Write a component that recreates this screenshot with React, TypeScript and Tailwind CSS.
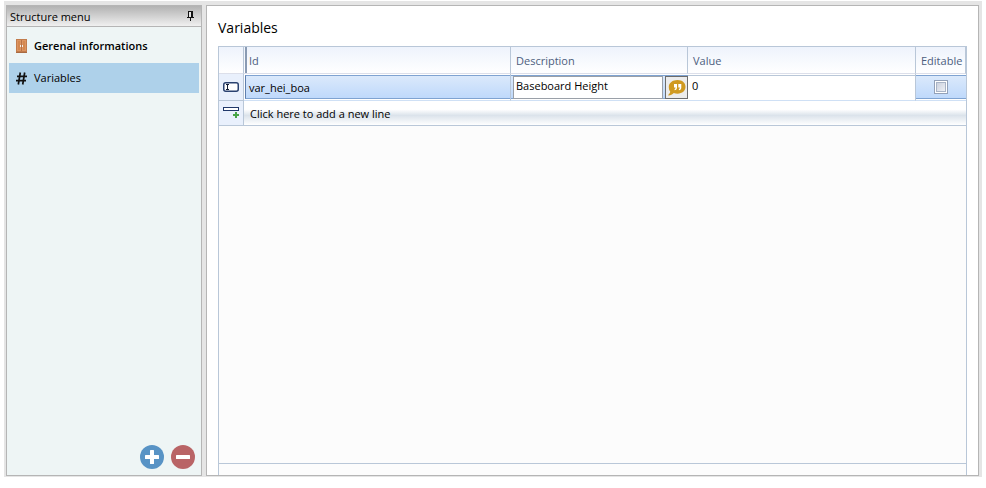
import React, { useState } from "react";

function PinIcon() {
  return (
    <svg width="7" height="11" viewBox="0 0 7 11" shapeRendering="crispEdges" aria-hidden="true">
      <path d="M1 0h5v6H1z" fill="#111" />
      <path d="M2 1h2v5H2z" fill="#e4e4e4" />
      <path d="M0 6h7v1H0zM3 7h1v3H3z" fill="#111" />
    </svg>
  );
}

function CabinetIcon() {
  return (
    <svg width="11" height="14" viewBox="0 0 11 14" aria-hidden="true">
      <path d="M0 0h11v14H0z" fill="#c27c4c" />
      <path d="M1 1h4v11H1zM6 1h4v11H6z" fill="#dc9562" />
      <path d="M2 2h2v9H2zM7 2h2v9H7z" fill="#d4884f" />
      <path d="M5 1h1v11H5z" fill="#b87347" />
      <path d="M4 6h1v2H4zM6 6h1v2H6z" fill="#f3efe9" />
      <path d="M0 13h11v1H0z" fill="#a96a42" />
    </svg>
  );
}

function HashIcon() {
  return (
    <svg width="11" height="13" viewBox="0 0 11 13" fill="none" stroke="#111" aria-hidden="true">
      <path d="M4.300 0.500L2.300 12.500M8.700 0.500L6.700 12.500" strokeWidth="1.700" />
      <path d="M1 4.300h10M0 8.700h10" strokeWidth="1.700" />
    </svg>
  );
}

function EditRowIcon() {
  return (
    <svg className="mx-auto block" width="16" height="10" viewBox="0 0 16 10" fill="none" aria-hidden="true">
      <rect x="0.750" y="0.750" width="14.500" height="8.500" rx="2" fill="#fff" stroke="#2b4270" strokeWidth="1.500" />
      <path d="M3 2.500h3M3 7.500h3M4.500 2.500v5" stroke="#111b33" />
    </svg>
  );
}

function AddRowIcon() {
  return (
    <svg className="mx-auto block" width="16" height="12" viewBox="0 0 16 12" fill="none" aria-hidden="true">
      <path d="M0 0h16v4H0z" fill="#20386a" />
      <path d="M1 1h14v2H1z" fill="#fff" />
      <path d="M13 5v6M10 8h6" stroke="#47a447" strokeWidth="2" />
    </svg>
  );
}

function QuoteIcon() {
  return (
    <svg width="18" height="16" viewBox="0 0 18 16" aria-hidden="true">
      <path
        d="M9.500 0C14.300 0 17.500 2.900 17.500 6.800s-3.200 6.900-8 6.900c-1.300 0-2.600-.2-3.700-.7C4.300 14.500 2.500 15.500.7 15.600c-.5 0-.6-.5-.3-.8 1-.9 1.700-2 1.800-3.200C1.100 10.300.8 8.700.8 6.800.8 2.900 4.700 0 9.500 0z"
        fill="#d09a20"
      />
      <path
        d="M6 4h3v3.500c0 1.600-.9 2.600-2.400 2.800V9c.7-.2 1-.7 1-1.500H6zM10.300 4h3v3.500c0 1.600-.9 2.600-2.400 2.800V9c.7-.2 1-.7 1-1.500h-1.600z"
        fill="#fff"
      />
    </svg>
  );
}

function RoundButton({ label, color, plus }: { label: string; color: string; plus?: boolean }) {
  return (
    <button type="button" aria-label={label} className={`grid size-6 place-items-center rounded-full ${color}`}>
      <svg width="14" height="14" viewBox="0 0 14 14" fill="#fff" aria-hidden="true">
        <rect x="0" y="5" width="14" height="4" rx="0.500" />
        {plus && <rect x="5" y="0" width="4" height="14" rx="0.500" />}
      </svg>
    </button>
  );
}

const head =
  "h-[27px] border-r border-b border-r-[#b9c7d8] border-b-[#dcdfea] bg-linear-to-b from-[#eef3fc] to-white p-0 pt-0.5 pl-[5px] text-left font-normal text-[#4d5e7d]";
const selected = "border-y border-y-[#7fa3d1] bg-linear-to-b from-[#dbe9fb] to-[#bfd9fb]";

export default function App() {
  const [description, setDescription] = useState("Baseboard Height");
  const [value, setValue] = useState("0");
  const [editable, setEditable] = useState(false);

  return (
    <div className="h-screen bg-white pt-px pr-1 pb-[11px] pl-1 font-['Open_Sans','Noto_Sans',sans-serif] text-[11px] leading-4 text-black">
      <div className="flex h-full gap-1 bg-[#e5e5e5] pt-1 pr-[3px] pb-px pl-0.5">
        <aside className="flex w-[196px] shrink-0 flex-col border border-[#b5b5b5] bg-[#eef5f5]">
          <header className="flex h-[21px] items-center justify-between border-b border-[#b5b5b5] bg-linear-to-b from-[#b2b2b2] to-[#f0f0f0] pt-px pr-[7px] pl-[3px]">
            <h2>Structure menu</h2>
            <button type="button" aria-label="Pin panel">
              <PinIcon />
            </button>
          </header>
          <nav className="flex flex-col gap-0.5 px-0.5 pt-1">
            <a href="#general" className="flex h-[30px] items-center gap-[7px] pl-[7px] font-semibold">
              <CabinetIcon />
              Gerenal informations
            </a>
            <a
              href="#variables"
              aria-current="page"
              className="flex h-[30px] items-center gap-[7px] bg-[#aed1ea] pl-[7px]"
            >
              <HashIcon />
              Variables
            </a>
          </nav>
          <div className="mt-auto flex justify-end gap-[7px] pr-1.5 pb-1.5">
            <RoundButton label="Add" color="bg-[#5893c5]" plus />
            <RoundButton label="Remove" color="bg-[#b96466]" />
          </div>
        </aside>

        <main className="flex min-w-0 flex-1 flex-col border border-[#b5b5b5] bg-white px-[11px]">
          <h1 className="flex h-10 items-center pt-1 text-[14px]">Variables</h1>
          <div className="flex min-h-0 flex-1 flex-col border border-b-0 border-[#b9c7d8] bg-[#fcfcfc]">
            <table className="w-full table-fixed border-separate border-spacing-0 bg-white">
              <colgroup>
                <col className="w-[25px]" />
                <col className="w-[267px]" />
                <col className="w-[177px]" />
                <col />
                <col className="w-[50px]" />
              </colgroup>
              <thead>
                <tr>
                  <th className={head} aria-label="Row state" />
                  <th className="h-[27px] border-r border-b border-r-[#b9c7d8] border-b-[#dcdfea] bg-linear-to-b from-[#eef3fc] to-white p-0 pl-px text-left font-normal text-[#4d5e7d]">
                    <span className="flex h-[26px] items-center border-l-2 border-[#8a9bb3] pt-0.5 pl-0.5">Id</span>
                  </th>
                  <th className={head}>Description</th>
                  <th className={head}>Value</th>
                  <th className={head}>Editable</th>
                </tr>
              </thead>
              <tbody>
                <tr>
                  <td className="h-[27px] border-r border-b border-[#b9c7d8] bg-[#e9f0fc] p-0">
                    <EditRowIcon />
                  </td>
                  <td className="border-r border-b border-r-[#b9c7d8] border-b-[#cfe0f5] p-0 pt-px pb-px pl-px">
                    <div className={`flex h-6 items-center border-l border-l-[#5f7fae] pt-0.5 pl-[3px] ${selected}`}>
                      var_hei_boa
                    </div>
                  </td>
                  <td className="border-b border-[#cfe0f5] p-0 py-px">
                    <div className={`flex h-6 gap-0.5 pl-0.5 ${selected}`}>
                      <input
                        aria-label="Description"
                        value={description}
                        onChange={(e) => setDescription(e.target.value)}
                        className="-mb-px min-w-0 flex-1 border border-[#9aa0a8] bg-white px-0.5 pb-1"
                      />
                      <button
                        type="button"
                        aria-label="Translate description"
                        className="-mb-px grid w-[23px] shrink-0 place-items-center border border-[#6c6c6c] bg-[#ececec]"
                      >
                        <QuoteIcon />
                      </button>
                    </div>
                  </td>
                  <td className="border-r border-b border-r-[#b9c7d8] border-b-[#cfe0f5] p-0 py-px">
                    <input
                      aria-label="Value"
                      value={value}
                      onChange={(e) => setValue(e.target.value)}
                      className="block h-6 w-full border-t border-[#b9c7d8] bg-white px-1 pb-1"
                    />
                  </td>
                  <td className="border-b border-[#cfe0f5] p-0 py-px">
                    <div className={`grid h-6 place-items-center ${selected}`}>
                      <input
                        type="checkbox"
                        aria-label="Editable"
                        checked={editable}
                        onChange={(e) => setEditable(e.target.checked)}
                        className="size-3.5 appearance-none border border-[#93a1b8] bg-linear-to-br from-[#c3cad8] to-[#f7f8fb] shadow-[inset_0_0_0_1px_#fff,inset_0_0_0_2px_#a9b4c6] checked:from-[#40567f]"
                      />
                    </div>
                  </td>
                </tr>
                <tr>
                  <td className="h-[25px] border-r border-b border-[#b9c7d8] bg-[#e9f0fc] p-0">
                    <AddRowIcon />
                  </td>
                  <td
                    colSpan={4}
                    className="border-b border-[#b9c7d8] bg-linear-to-b from-white from-35% via-[#dbe3eb] via-60% to-white p-0"
                  >
                    <button type="button" className="block w-full pt-px pl-1.5 text-left">
                      Click here to add a new line
                    </button>
                  </td>
                </tr>
              </tbody>
            </table>
            <div className="mt-auto h-3 border-t border-[#b9c7d8]" />
          </div>
        </main>
      </div>
    </div>
  );
}
